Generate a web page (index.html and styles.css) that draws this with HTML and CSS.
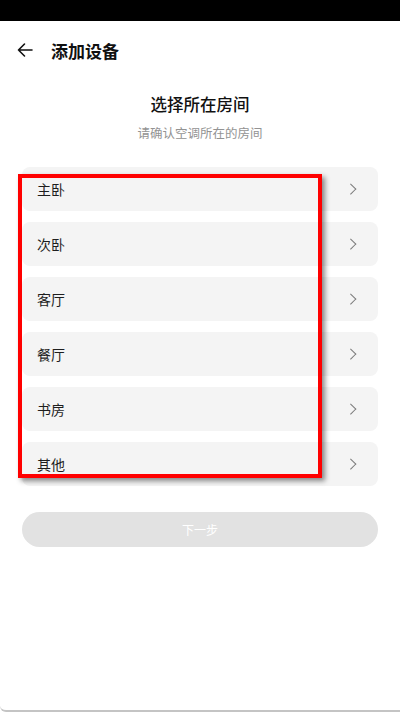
FILE: index.html
```html
<!DOCTYPE html>
<html lang="zh-CN">
<head>
    <meta charset="UTF-8">
    <meta name="viewport" content="width=device-width, initial-scale=1.0">
    <link rel="stylesheet" href="styles.css">
    <title>添加设备</title>
</head>
<body>
    <div class="screen">
        <div class="status-bar"></div>

        <header class="top-bar">
            <svg class="back" width="16" height="16" viewBox="0 0 16 16">
                <path d="M15 8H1.5M7.5 2L1.5 8l6 6" fill="none" stroke="#111" stroke-width="1.6" stroke-linecap="round" stroke-linejoin="round"/>
            </svg>
            <h1>添加设备</h1>
        </header>

        <div class="intro">
            <h2>选择所在房间</h2>
            <p>请确认空调所在的房间</p>
        </div>

        <ul class="rooms">
            <li>主卧 <span class="chevron"></span></li>
            <li>次卧 <span class="chevron"></span></li>
            <li>客厅 <span class="chevron"></span></li>
            <li>餐厅 <span class="chevron"></span></li>
            <li>书房 <span class="chevron"></span></li>
            <li>其他 <span class="chevron"></span></li>
        </ul>

        <button class="next" disabled>下一步</button>

        <div class="highlight"></div>
    </div>
</body>
</html>
```

FILE: styles.css
```css
body {
    margin: 0;
    padding: 0;
    background-color: #fff;
    font-family: "Noto Sans CJK SC", "Noto Sans", sans-serif;
    color: #1a1a1a;
}

.screen {
    position: relative;
    height: 712px;
    box-sizing: border-box;
    border-bottom: 2px solid #c4c4c4;
    border-bottom-left-radius: 6px;
    overflow: hidden;
}

.status-bar {
    height: 21px;
    background-color: #000;
}

.top-bar {
    height: 58px;
    display: flex;
    align-items: center;
    gap: 18px;
    padding-left: 17px;
}

.top-bar h1 {
    margin: 0;
    font-size: 17px;
    font-weight: 700;
    color: #111;
}

.intro {
    text-align: center;
    margin-top: 13px;
}

.intro h2 {
    margin: 0;
    font-size: 16.5px;
    line-height: 24px;
    font-weight: 500;
    color: #111;
}

.intro p {
    margin: 8px 0 0;
    font-size: 12.5px;
    line-height: 18px;
    color: #939393;
}

.rooms {
    list-style: none;
    margin: 25px 22px 0;
    padding: 0;
    display: flex;
    flex-direction: column;
    gap: 11px;
}

.rooms li {
    height: 44px;
    display: flex;
    align-items: center;
    justify-content: space-between;
    padding: 0 24px 0 15px;
    background-color: #f4f4f4;
    border-radius: 8px;
    font-size: 14px;
    color: #1e1e1e;
}

.chevron {
    width: 6.5px;
    height: 6.5px;
    border-top: 1.6px solid #7a7a7a;
    border-right: 1.6px solid #7a7a7a;
    transform: rotate(45deg);
}

.next {
    display: block;
    width: 356px;
    height: 35px;
    margin: 26px 22px 0;
    border: none;
    border-radius: 18px;
    background-color: #e2e2e2;
    color: #fff;
    font-family: inherit;
    font-size: 12px;
}

.highlight {
    position: absolute;
    left: 18px;
    top: 174px;
    width: 304px;
    height: 304px;
    box-sizing: border-box;
    border: 4px solid #ff0000;
    box-shadow: 3px 3px 5px rgba(0, 0, 0, 0.45);
}
```
